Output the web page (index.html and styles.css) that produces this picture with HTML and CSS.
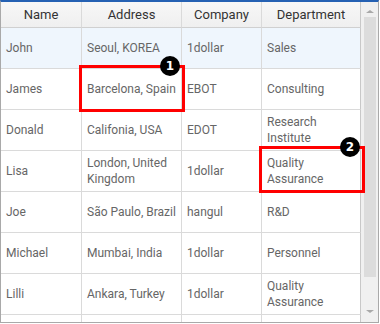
FILE: index.html
```html
<!DOCTYPE html>
<html>
<head>
<meta charset="utf-8">
<link rel="stylesheet" href="styles.css">
</head>
<body>
<div class="grid-frame">
  <div class="grid-main">
    <div class="row head">
      <div class="cell">Name</div>
      <div class="cell">Address</div>
      <div class="cell">Company</div>
      <div class="cell">Department</div>
    </div>
    <div class="body">
      <div class="row sel">
        <div class="cell">John</div>
        <div class="cell">Seoul, KOREA</div>
        <div class="cell">1dollar</div>
        <div class="cell">Sales</div>
      </div>
      <div class="row">
        <div class="cell">James</div>
        <div class="cell">Barcelona, Spain</div>
        <div class="cell">EBOT</div>
        <div class="cell">Consulting</div>
      </div>
      <div class="row">
        <div class="cell">Donald</div>
        <div class="cell">Califonia, USA</div>
        <div class="cell">EDOT</div>
        <div class="cell">Research Institute</div>
      </div>
      <div class="row">
        <div class="cell">Lisa</div>
        <div class="cell">London, United Kingdom</div>
        <div class="cell">1dollar</div>
        <div class="cell">Quality Assurance</div>
      </div>
      <div class="row">
        <div class="cell">Joe</div>
        <div class="cell">São Paulo, Brazil</div>
        <div class="cell">hangul</div>
        <div class="cell">R&amp;D</div>
      </div>
      <div class="row">
        <div class="cell">Michael</div>
        <div class="cell">Mumbai, India</div>
        <div class="cell">1dollar</div>
        <div class="cell">Personnel</div>
      </div>
      <div class="row">
        <div class="cell">Lilli</div>
        <div class="cell">Ankara, Turkey</div>
        <div class="cell">1dollar</div>
        <div class="cell">Quality Assurance</div>
      </div>
      <div class="row">
        <div class="cell"></div>
        <div class="cell"></div>
        <div class="cell"></div>
        <div class="cell"></div>
      </div>
    </div>
  </div>
  <div class="scrollbar">
    <div class="arrow up"></div>
    <div class="thumb"></div>
    <div class="arrow down"></div>
  </div>
  <div class="mark mark-1"><span class="badge">1</span></div>
  <div class="mark mark-2"><span class="badge">2</span></div>
</div>
</body>
</html>
```
FILE: styles.css
```css
html, body {
  margin: 0;
  padding: 0;
  background: #fff;
}
.grid-frame {
  position: relative;
  width: 379px;
  height: 323px;
  box-sizing: border-box;
  border: 1px solid #a9a9a9;
  border-top: 2px solid #2561b3;
  display: flex;
  overflow: hidden;
  font-family: Roboto, "Noto Sans", sans-serif;
  font-size: 12px;
}
.grid-main {
  width: 360px;
  display: flex;
  flex-direction: column;
  overflow: hidden;
}
.row {
  display: grid;
  grid-template-columns: 81px 100px 80px 99px;
  height: 41px;
}
.cell {
  box-sizing: border-box;
  border-right: 1px solid #dadada;
  border-bottom: 1px solid #dadada;
  display: flex;
  align-items: center;
  padding: 0 5px;
  color: #666;
  line-height: 16px;
}
.row .cell:last-child {
  border-right-color: #c8c8c8;
}
.head {
  height: 26px;
  background: linear-gradient(#f7f7f7, #efefef);
}
.head .cell {
  justify-content: center;
  color: #333;
  font-size: 13px;
  border-bottom-color: #d0d0d0;
}
.sel {
  background: #eff6fd;
}
.body {
  flex: 1;
  overflow: hidden;
}
.scrollbar {
  width: 17px;
  background: #f0f0f0;
  position: relative;
  display: flex;
  flex-direction: column;
  align-items: center;
}
.thumb {
  width: 12px;
  margin-left: 1px;
  height: 260px;
  background: #dcdcdc;
}
.arrow {
  width: 0;
  height: 0;
  border-left: 4px solid transparent;
  border-right: 4px solid transparent;
  margin: 0 0 0 1px;
}
.up {
  border-bottom: 3px solid #a8a8a8;
  margin-top: 8px;
  margin-bottom: 4px;
}
.down {
  border-top: 3px solid #a8a8a8;
  margin-top: 33px;
}
.mark {
  position: absolute;
  width: 106px;
  height: 47px;
  box-sizing: border-box;
  border: 3px solid #f00;
}
.mark-1 {
  left: 78px;
  top: 63px;
}
.mark-2 {
  left: 258px;
  top: 144px;
}
.badge {
  position: absolute;
  right: 2px;
  top: -12px;
  width: 20px;
  height: 20px;
  border-radius: 50%;
  background: #000;
  color: #fff;
  font-family: "DejaVu Sans", sans-serif;
  font-weight: bold;
  font-size: 12px;
  line-height: 20px;
  text-align: center;
}
```
